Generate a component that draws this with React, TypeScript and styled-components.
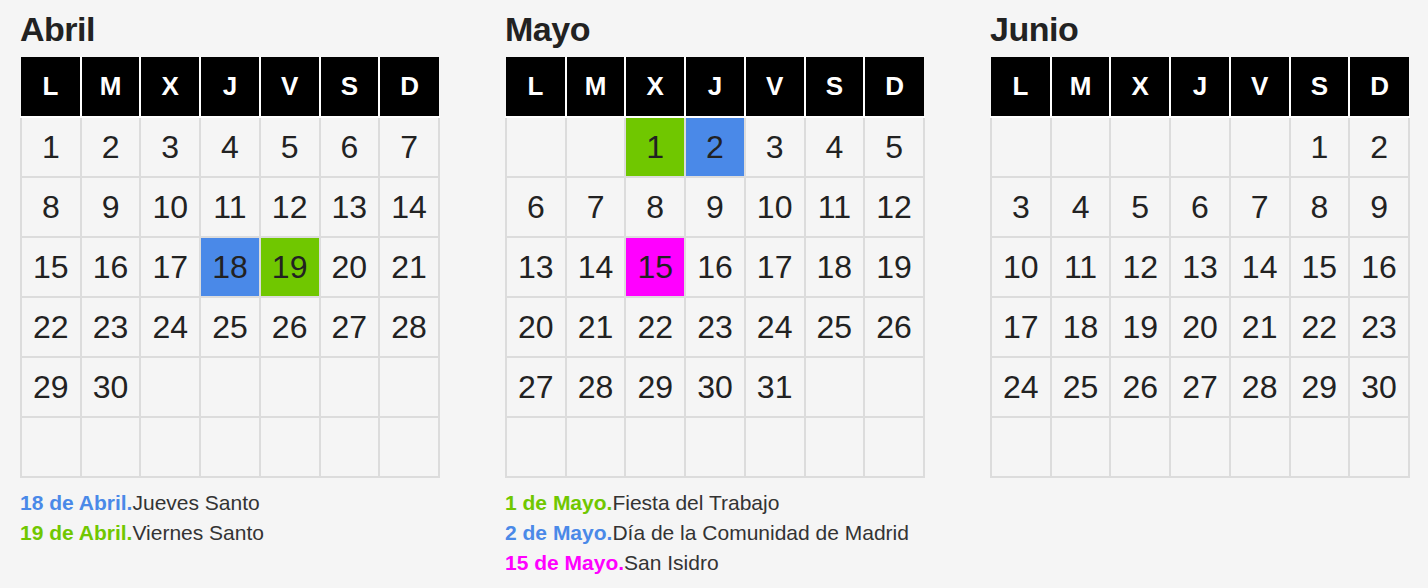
import React from 'react';
import styled, {createGlobalStyle} from 'styled-components';

const GlobalStyle = createGlobalStyle`
    body {
        margin: 0;
        background: #f5f5f5;
        font-family: "Liberation Sans", Arial, Helvetica, sans-serif;
        color: #222;
    }
`;

const COLORS = {
    blue: '#4a89e8',
    green: '#70c700',
    magenta: '#ff00ff',
};

type Mark = keyof typeof COLORS;

interface Holiday {
    day: number;
    mark: Mark;
    name: string;
}

interface Month {
    name: string;
    offset: number;
    days: number;
    holidays: Holiday[];
}

const MONTHS: Month[] = [
    {
        name: 'Abril', offset: 0, days: 30, holidays: [
            {day: 18, mark: 'blue', name: 'Jueves Santo'},
            {day: 19, mark: 'green', name: 'Viernes Santo'},
        ]
    },
    {
        name: 'Mayo', offset: 2, days: 31, holidays: [
            {day: 1, mark: 'green', name: 'Fiesta del Trabajo'},
            {day: 2, mark: 'blue', name: 'Día de la Comunidad de Madrid'},
            {day: 15, mark: 'magenta', name: 'San Isidro'},
        ]
    },
    {
        name: 'Junio', offset: 5, days: 30, holidays: []
    },
];

const WEEKDAYS = ['L', 'M', 'X', 'J', 'V', 'S', 'D'];

const Page = styled.div`
    display: flex;
    gap: 65px;
    padding: 9px 20px 0 20px;
`;

const MonthBlock = styled.section`
    width: 420px;
    display: flex;
    flex-direction: column;
`;

const Title = styled.h2`
    margin: 0 0 8px 0;
    font-size: 34px;
    line-height: 40px;
    font-weight: bold;
    color: #222;
    letter-spacing: -0.5px;
`;

const Table = styled.table`
    border-collapse: collapse;
    table-layout: fixed;
    width: 420px;
`;

const HeadCell = styled.th`
    height: 59px;
    padding: 0;
    background: #000;
    color: #fff;
    border: 2px solid #fff;
    border-top: none;
    font-size: 26px;
    font-weight: bold;
    text-align: center;

    &:first-child {
        border-left: none;
    }

    &:last-child {
        border-right: none;
    }
`;

const DayCell = styled.td<{ $mark?: Mark }>`
    height: 58px;
    padding: 0;
    border: 2px solid #dcdcdc;
    background: ${p => (p.$mark ? COLORS[p.$mark] : 'transparent')};
    font-size: 32px;
    text-align: center;
    color: #222;
`;

const Legend = styled.ul`
    list-style: none;
    margin: 10px 0 0 0;
    padding: 0;
`;

const LegendItem = styled.li`
    font-size: 21px;
    line-height: 30px;
    color: #333;
`;

const LegendDate = styled.strong<{ $mark: Mark }>`
    color: ${p => COLORS[p.$mark]};
`;

function buildWeeks(month: Month): (number | null)[][] {
    const cells: (number | null)[] = [];
    for (let i = 0; i < month.offset; i++) cells.push(null);
    for (let d = 1; d <= month.days; d++) cells.push(d);
    while (cells.length < 42) cells.push(null);
    const weeks: (number | null)[][] = [];
    for (let i = 0; i < 42; i += 7) weeks.push(cells.slice(i, i + 7));
    return weeks;
}

const Calendar: React.FC<{ month: Month }> = ({month}) => {
    const weeks = buildWeeks(month);
    const markFor = (day: number | null) => month.holidays.find(h => h.day === day)?.mark;

    return (
        <MonthBlock>
            <Title>{month.name}</Title>
            <Table>
                <thead>
                <tr>
                    {WEEKDAYS.map(w => <HeadCell key={w}>{w}</HeadCell>)}
                </tr>
                </thead>
                <tbody>
                {weeks.map((week, i) => (
                    <tr key={i}>
                        {week.map((day, j) => (
                            <DayCell key={j} $mark={markFor(day)}>{day ?? ''}</DayCell>
                        ))}
                    </tr>
                ))}
                </tbody>
            </Table>
            {month.holidays.length > 0 && (
                <Legend>
                    {[...month.holidays].sort((a, b) => a.day - b.day).map(h => (
                        <LegendItem key={h.day}>
                            <LegendDate $mark={h.mark}>{h.day} de {month.name}.</LegendDate>{h.name}
                        </LegendItem>
                    ))}
                </Legend>
            )}
        </MonthBlock>
    );
};

const App: React.FC = () => (
    <>
        <GlobalStyle/>
        <Page>
            {MONTHS.map(m => <Calendar key={m.name} month={m}/>)}
        </Page>
    </>
);

export default App;
